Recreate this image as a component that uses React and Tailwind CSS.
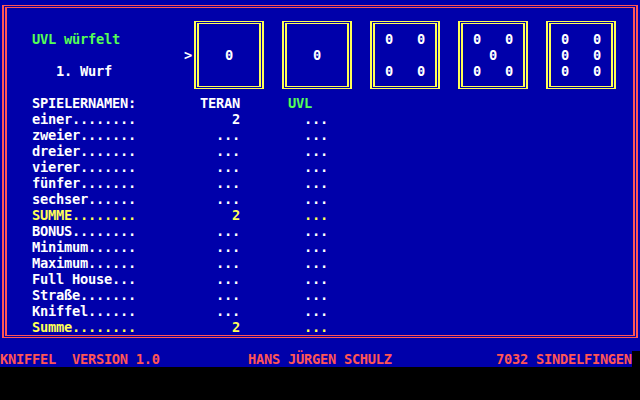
const rows = [
  { label: 'einer........', a: '2', b: '...' },
  { label: 'zweier.......', a: '...', b: '...' },
  { label: 'dreier.......', a: '...', b: '...' },
  { label: 'vierer.......', a: '...', b: '...' },
  { label: 'fünfer.......', a: '...', b: '...' },
  { label: 'sechser......', a: '...', b: '...' },
  { label: 'SUMME........', a: '2', b: '...', sum: true },
  { label: 'BONUS........', a: '...', b: '...' },
  { label: 'Minimum......', a: '...', b: '...' },
  { label: 'Maximum......', a: '...', b: '...' },
  { label: 'Full House...', a: '...', b: '...' },
  { label: 'Straße.......', a: '...', b: '...' },
  { label: 'Kniffel......', a: '...', b: '...' },
  { label: 'Summe........', a: '2', b: '...', sum: true },
];

// pip layout per die value, cells of a 3x3 grid
const pips = {
  1: [4],
  2: [0, 8],
  3: [0, 4, 8],
  4: [0, 2, 6, 8],
  5: [0, 2, 4, 6, 8],
  6: [0, 2, 3, 5, 6, 8],
};

const dice = [1, 1, 4, 5, 6];

function Die({ value }) {
  return (
    <div className="w-[70px] h-[68px] border-x-2 border-y border-[#ffff55] p-px">
      <div className="w-full h-full border-x-2 border-y border-[#ffff55] flex items-center justify-center">
        <div className="grid grid-cols-3 w-[48px] h-[48px]">
          {Array.from({ length: 9 }).map((_, i) => (
            <div key={i} className="h-4 leading-4 text-center text-white">
              {pips[value].includes(i) ? '0' : ''}
            </div>
          ))}
        </div>
      </div>
    </div>
  );
}

export default function App() {
  return (
    <div
      className="w-[640px] h-[400px] bg-black text-[13.7px] font-bold tracking-[-0.25px] overflow-hidden"
      style={{ fontFamily: '"DejaVu Sans Mono", "Liberation Mono", monospace' }}
    >
      <div className="w-[640px] h-[351px] bg-[#0000aa] pt-[5px] pl-[2px]">
        <div className="w-[636px] h-[333px] border-x-2 border-y border-[#ff5555] p-px">
          <div className="w-full h-full border-x-2 border-y border-[#ff5555]">
            <div className="flex h-[87px]">
              <div className="w-[177px] pl-[25px] pt-[23px] leading-4 whitespace-pre">
                <div className="h-4 text-[#55ff55]">UVL würfelt</div>
                <div className="h-4 mt-4 text-white">{'   1. Wurf'}</div>
              </div>
              <div className="w-[10px] pt-[39px] leading-4 text-white">&gt;</div>
              <div className="flex gap-[18px] pt-[13px]">
                {dice.map((v, i) => (
                  <Die key={i} value={v} />
                ))}
              </div>
            </div>
            <div className="pl-[25px] leading-4 whitespace-pre">
              <div className="flex h-4">
                <div className="w-[168px] text-white">SPIELERNAMEN:</div>
                <div className="w-[40px] text-white">TERAN</div>
                <div className="w-[48px]" />
                <div className="w-[40px] text-[#55ff55]">UVL</div>
              </div>
              {rows.map((r) => {
                const c = r.sum ? 'text-[#ffff55]' : 'text-white';
                return (
                  <div key={r.label} className={`flex h-4 ${c}`}>
                    <div className="w-[168px]">{r.label}</div>
                    <div className="w-[40px] text-right">{r.a}</div>
                    <div className="w-[48px]" />
                    <div className="w-[40px] text-right">{r.b}</div>
                  </div>
                );
              })}
            </div>
          </div>
        </div>
      </div>
      <div className="w-[632px] h-4 leading-4 bg-[#0000aa] text-[#ff5555] flex whitespace-pre">
        <div className="w-[248px]">KNIFFEL  VERSION 1.0</div>
        <div className="w-[248px]">HANS JÜRGEN SCHULZ</div>
        <div>7032 SINDELFINGEN</div>
      </div>
    </div>
  );
}
